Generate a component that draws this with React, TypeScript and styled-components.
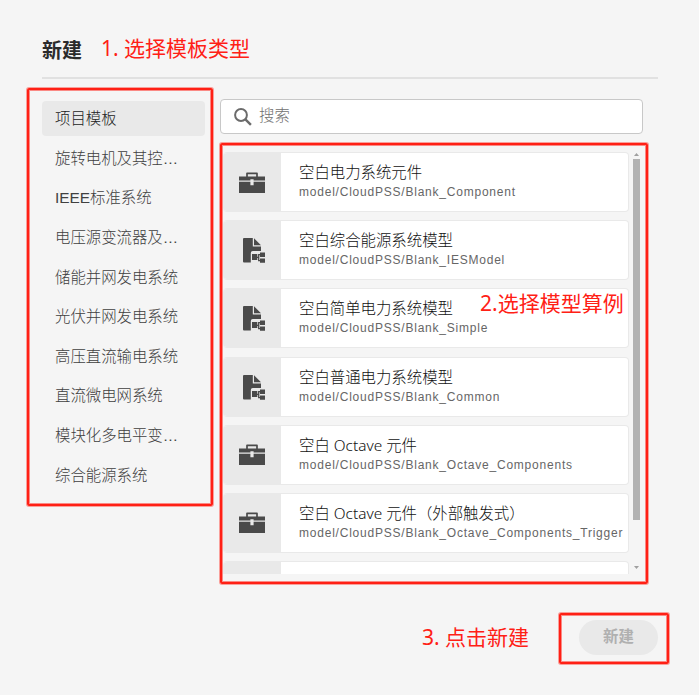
import React from "react";
import styled, { createGlobalStyle } from "styled-components";

const GlobalStyle = createGlobalStyle`
  * { box-sizing: border-box; }
  body {
    margin: 0;
    background: #f5f5f5;
    color: #2b2b2b;
    font-family: "Liberation Sans", "Noto Sans CJK SC", sans-serif;
    overflow: hidden;
  }
`;

const Dialog = styled.main`
  position: relative;
  width: 699px;
  height: 695px;
  padding: 30px 41px 0 42px;
  display: flex;
  flex-direction: column;
  background: #f5f5f5;
`;

const Header = styled.header`
  height: 49px;
  flex: none;
  border-bottom: 2px solid #e1e1e1;
`;

const Title = styled.h1`
  margin: 0;
  font: 700 20px/40px "Noto Sans CJK SC", sans-serif;
`;

const Content = styled.div`
  display: flex;
  gap: 15px;
  height: 495px;
  padding-top: 20px;
`;

const Sidebar = styled.nav`
  width: 163px;
  flex: none;
  padding-top: 2px;
  display: flex;
  flex-direction: column;
  gap: 4.65px;
`;

const Category = styled.div<{ $active?: boolean }>`
  height: 35px;
  flex: none;
  padding: 0 27px 0 13px;
  border-radius: 4px;
  background: ${(p) => (p.$active ? "#e9e9e9" : "transparent")};
  color: ${(p) => (p.$active ? "#222" : "#404040")};
  font: 300 15.4px/35px "Liberation Sans", "Noto Sans CJK SC", sans-serif;
  white-space: nowrap;
`;

const Main = styled.section`
  width: 423px;
  display: flex;
  flex-direction: column;
  gap: 18px;
`;

const Search = styled.div`
  height: 35px;
  flex: none;
  display: flex;
  align-items: center;
  gap: 7px;
  padding-left: 13px;
  border: 1px solid #c8c8c8;
  border-radius: 4px;
  background: #fff;
  color: #707070;
  font-size: 15.4px;
  line-height: 31px;
  font-weight: 300;

  svg { display: block; }
  span { padding-bottom: 2px; }
`;

const ListArea = styled.div`
  display: flex;
  gap: 3px;
  height: 422px;
  padding-left: 3px;
`;

const List = styled.div`
  width: 406px;
  height: 422px;
  flex: none;
  overflow: hidden;
  display: flex;
  flex-direction: column;
  gap: 8.2px;
`;

const Card = styled.article`
  height: 60px;
  flex: none;
  display: flex;
  border: 1px solid #e9e9e9;
  border-left: 0;
  border-radius: 4px;
  background: #fff;
  overflow: hidden;
`;

const IconCell = styled.div<{ $shift?: boolean }>`
  width: 58px;
  flex: none;
  display: flex;
  align-items: center;
  justify-content: center;
  padding: 1px 0 0 ${(p) => (p.$shift ? 4 : 0)}px;
  background: #e9e9e9;
  color: #4a4a4a;
`;

const CardText = styled.div`
  padding: 10px 0 0 18px;
  white-space: nowrap;
`;

const CardTitle = styled.div`
  height: 20px;
  color: #111;
  font: 300 15.4px/20px "Noto Sans", "Noto Sans CJK SC", sans-serif;
`;

const CardPath = styled.div`
  color: #666;
  font-size: 12px;
  line-height: 18px;
  letter-spacing: 0.78px;
`;

const Scrollbar = styled.div`
  width: 9px;
  flex: none;
  display: flex;
  flex-direction: column;
  align-items: center;
  justify-content: space-between;
  padding: 1px 0 5px;
`;

const Thumb = styled.div`
  width: 7px;
  height: 361px;
  margin: 3px 0 auto;
  background: #b2b2b2;
`;

const Arrow = styled.i<{ $down?: boolean }>`
  width: 5px;
  height: 3px;
  background: #a0a0a0;
  clip-path: ${(p) => (p.$down ? "polygon(0 0, 100% 0, 50% 100%)" : "polygon(50% 0, 100% 100%, 0 100%)")};
`;

const Footer = styled.footer`
  display: flex;
  justify-content: flex-end;
  padding-top: 46px;
`;

const CreateButton = styled.button`
  width: 79px;
  height: 35px;
  padding: 0 0 5px;
  border: 0;
  border-radius: 18px;
  background: #e9e9e9;
  color: #b0b0b0;
  font: 700 15.4px/30px "Noto Sans CJK SC", sans-serif;
`;

const Outline = styled.div<{ $x: number; $y: number; $w: number; $h: number }>`
  position: absolute;
  left: ${(p) => p.$x}px;
  top: ${(p) => p.$y}px;
  width: ${(p) => p.$w}px;
  height: ${(p) => p.$h}px;
  border: 2px solid #ff2015;
  border-radius: 2px;
  box-shadow: 0 0 0 1px rgba(255, 32, 21, 0.4), inset 0 0 0 1px rgba(255, 32, 21, 0.5);
  pointer-events: none;
`;

const Note = styled.div<{ $x: number; $y: number }>`
  position: absolute;
  left: ${(p) => p.$x}px;
  top: ${(p) => p.$y}px;
  color: #ff2015;
  font: 400 21px/30px "Noto Sans", "Noto Sans CJK SC", sans-serif;
  white-space: nowrap;
`;

const SearchIcon = () => (
  <svg width="18" height="18" viewBox="0 0 18 18" fill="none" stroke="#6b6b6b">
    <circle cx="7" cy="7" r="5.9" strokeWidth="2" />
    <path d="m11.2 11.2 5.7 5.7" strokeWidth="2.4" />
  </svg>
);

const BriefcaseIcon = () => (
  <svg width="26" height="22" viewBox="0 0 26 22" fill="none">
    <path d="M8 5V1.4h10V5" stroke="currentColor" strokeWidth="1.7" strokeLinejoin="round" />
    <path d="M0 4.4h26v4H14.6V7.3h-3.2v1.1H0ZM0 9.7h11.4v3.6h3.2V9.7H26V21H0Z" fill="currentColor" />
  </svg>
);

const ModelIcon = () => (
  <svg width="22" height="25" viewBox="0 0 22 25" fill="none">
    <path d="M1 0h8.800v8.600H18v4.400H9.800q-2 0-2 2v9.500H1q-1 0-1-1V1q0-1 1-1Z" fill="currentColor" />
    <path d="M11 0.300v7h7Z" fill="currentColor" />
    <path d="M9 16h5.300v6H9ZM17 14.500h5v4.500h-5ZM17 20.500h5v4.300h-5Z" fill="currentColor" />
    <path d="M14 19.300h1.700M17.500 16.700h-1.800v6h1.800" stroke="currentColor" strokeWidth="1.300" />
  </svg>
);

const categories = [
  "项目模板",
  "旋转电机及其控…",
  "IEEE标准系统",
  "电压源变流器及…",
  "储能并网发电系统",
  "光伏并网发电系统",
  "高压直流输电系统",
  "直流微电网系统",
  "模块化多电平变…",
  "综合能源系统",
];

const templates = [
  { title: "空白电力系统元件", path: "model/CloudPSS/Blank_Component", component: true },
  { title: "空白综合能源系统模型", path: "model/CloudPSS/Blank_IESModel" },
  { title: "空白简单电力系统模型", path: "model/CloudPSS/Blank_Simple" },
  { title: "空白普通电力系统模型", path: "model/CloudPSS/Blank_Common" },
  { title: "空白 Octave 元件", path: "model/CloudPSS/Blank_Octave_Components", component: true },
  { title: "空白 Octave 元件（外部触发式）", path: "model/CloudPSS/Blank_Octave_Components_Trigger", component: true },
];

export default function App() {
  return (
    <>
      <GlobalStyle />
      <Dialog>
        <Header>
          <Title>新建</Title>
        </Header>
        <Content>
          <Sidebar>
            {categories.map((name, i) => (
              <Category key={name} $active={i === 0}>{name}</Category>
            ))}
          </Sidebar>
          <Main>
            <Search>
              <SearchIcon />
              <span>搜索</span>
            </Search>
            <ListArea>
              <List>
                {templates.map((t) => (
                  <Card key={t.path}>
                    <IconCell $shift={!t.component}>{t.component ? <BriefcaseIcon /> : <ModelIcon />}</IconCell>
                    <CardText>
                      <CardTitle>{t.title}</CardTitle>
                      <CardPath>{t.path}</CardPath>
                    </CardText>
                  </Card>
                ))}
                <Card>
                  <IconCell />
                </Card>
              </List>
              <Scrollbar>
                <Arrow />
                <Thumb />
                <Arrow $down />
              </Scrollbar>
            </ListArea>
          </Main>
        </Content>
        <Footer>
          <CreateButton>新建</CreateButton>
        </Footer>
        <Outline $x={27} $y={88} $w={186} $h={418} />
        <Outline $x={220} $y={143} $w={428} $h={441} />
        <Outline $x={559} $y={613} $w={110} $h={51} />
        <Note $x={101} $y={33}>1. 选择模板类型</Note>
        <Note $x={480} $y={288}>2.选择模型算例</Note>
        <Note $x={422} $y={622}>3. 点击新建</Note>
      </Dialog>
    </>
  );
}
